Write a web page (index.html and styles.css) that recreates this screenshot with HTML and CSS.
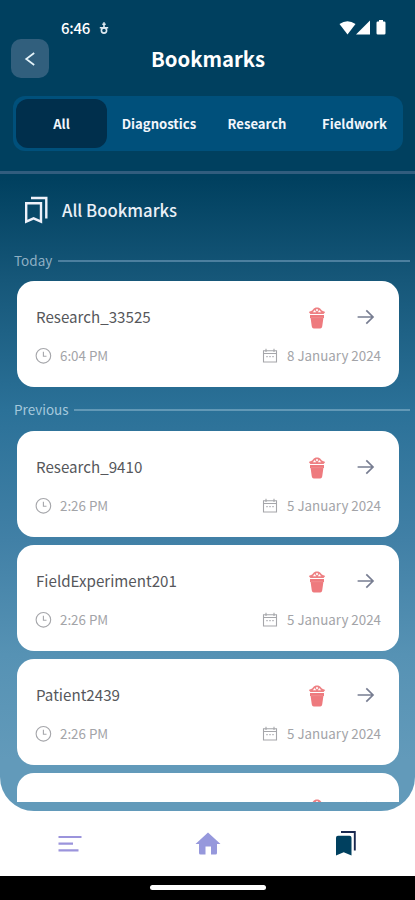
FILE: index.html
```html
<!DOCTYPE html>
<html lang="en">
<head>
<meta charset="utf-8">
<title>Bookmarks</title>
<link rel="stylesheet" href="styles.css">
</head>
<body>
<svg class="sprite" aria-hidden="true">
  <symbol id="trash" viewBox="0 0 18 24">
    <path d="M.8 5.9C2.2 5.5 4 4.9 5 3.5C6.1 2.1 7.3 1.5 9 1.5S11.9 2.1 13 3.5C14 4.9 15.8 5.5 17.2 5.9L15.6 7.9H2.4Z" fill="#ee8083"/>
    <path d="M4.8 6.2L6.8 4.1L8.1 6.2ZM9.9 6.2L11.2 4.1L13.2 6.2ZM7.7 4L9 2.8L10.3 4L9 5.5Z" fill="#fff"/>
    <path d="M2 9H16V12H15.4L14.2 20.5Q13.9 22.4 12.2 22.4H5.8Q4.1 22.4 3.8 20.5L2.6 12H2Z" fill="#ee7a7e"/>
    <path d="M3 11.7H15" stroke="#f29699" stroke-width=".6"/>
  </symbol>
  <symbol id="arrow" viewBox="0 0 18 18"><path d="M.6 9H16M9.3 2.3L16 9L9.3 15.7" fill="none" stroke="#777d91" stroke-width="1.7"/></symbol>
  <symbol id="clock" viewBox="0 0 18 18"><circle cx="9.4" cy="8.8" r="7.3" fill="none" stroke="#a5a6aa" stroke-width="1.1"/><path d="M9.4 4.8V9.3H12.5" fill="none" stroke="#a5a6aa" stroke-width="1.1"/></symbol>
  <symbol id="calendar" viewBox="0 0 16 16"><path d="M1.5 2.7H14.5V14H1.5ZM1.5 5.5H14.5M4 .7V4M12 .7V4" fill="none" stroke="#a5a6aa" stroke-width="1.1"/><path d="M4 8.7H6M7 8.7H9M10 8.7H12" stroke="#b5b6ba"/></symbol>
</svg>
<div class="phone">
  <main class="screen">
    <header class="header">
      <div class="status">
        <span class="time">6:46</span>
        <svg class="mic" viewBox="0 0 10 14"><path d="M5 1.3V7M3.3 3.3H6.7M.8 6.7H9.2" fill="none" stroke="#dce8f0" stroke-width="1.6"/><circle cx="5" cy="9.5" r="2.6" fill="none" stroke="#dce8f0" stroke-width="1.6"/></svg>
        <svg class="signals" viewBox="0 0 50 16" fill="#fff"><path d="M.5 4Q8.5 -1.5 16.5 4L8.5 14.5Z"/><path d="M31 .5V14.5H17Z"/><path d="M37.5 2.7Q37.5 1.5 38.8 1.5H40V0H44V1.5H45.2Q46.5 1.5 46.5 2.7V13.3Q46.5 14.5 45.2 14.5H38.8Q37.5 14.5 37.5 13.3Z"/></svg>
      </div>
      <div class="titlebar">
        <button class="back" aria-label="Back"><svg viewBox="0 0 12 14"><path d="M10.2 1L2.2 7L10.2 13" fill="none" stroke="#e5f4fa" stroke-width="1.7"/></svg></button>
        <h1>Bookmarks</h1>
      </div>
      <nav class="tabs">
        <span class="tab active">All</span><span class="tab">Diagnostics</span><span class="tab">Research</span><span class="tab">Fieldwork</span>
      </nav>
    </header>
    <div class="heading">
      <svg viewBox="0 0 26 30" fill="none" stroke="#eef1fa" stroke-width="2.4"><path d="M3.2 7.2H18V25.6L10.6 22.3L3.2 25.6ZM8 2H23.3V22.5"/></svg>
      <h2>All Bookmarks</h2>
    </div>
    <div class="list">
      <div class="group"><span>Today</span></div>
      <article class="card">
        <div class="row"><h3>Research_33525</h3><svg class="trash"><use href="#trash"/></svg><svg class="arrow"><use href="#arrow"/></svg></div>
        <div class="row meta"><svg class="clock"><use href="#clock"/></svg><span class="hour">6:04 PM</span><svg class="calendar"><use href="#calendar"/></svg><span class="date">8 January 2024</span></div>
      </article>
      <div class="group previous"><span>Previous</span></div>
      <article class="card">
        <div class="row"><h3>Research_9410</h3><svg class="trash"><use href="#trash"/></svg><svg class="arrow"><use href="#arrow"/></svg></div>
        <div class="row meta"><svg class="clock"><use href="#clock"/></svg><span class="hour">2:26 PM</span><svg class="calendar"><use href="#calendar"/></svg><span class="date">5 January 2024</span></div>
      </article>
      <article class="card">
        <div class="row"><h3>FieldExperiment201</h3><svg class="trash"><use href="#trash"/></svg><svg class="arrow"><use href="#arrow"/></svg></div>
        <div class="row meta"><svg class="clock"><use href="#clock"/></svg><span class="hour">2:26 PM</span><svg class="calendar"><use href="#calendar"/></svg><span class="date">5 January 2024</span></div>
      </article>
      <article class="card">
        <div class="row"><h3>Patient2439</h3><svg class="trash"><use href="#trash"/></svg><svg class="arrow"><use href="#arrow"/></svg></div>
        <div class="row meta"><svg class="clock"><use href="#clock"/></svg><span class="hour">2:26 PM</span><svg class="calendar"><use href="#calendar"/></svg><span class="date">5 January 2024</span></div>
      </article>
      <article class="card">
        <div class="row"><svg class="trash"><use href="#trash"/></svg><svg class="arrow"><use href="#arrow"/></svg></div>
      </article>
    </div>
  </main>
  <nav class="bottom">
    <svg class="menu" viewBox="0 0 26 20" stroke="#9b94dc" stroke-width="2.2"><path d="M1.5 3H24.5M1.5 9.6H16M1.5 16.3H21.5"/></svg>
    <svg class="home" viewBox="0 0 26 24" fill="#9698dc"><path d="M13 .5L25.5 12H22V21Q22 22.5 20.5 22.5H16V14.5H10.5V22.5H5.5Q4 22.5 4 21V12H.5Z"/></svg>
    <svg class="saved" viewBox="0 0 22 28"><path d="M1 7.7Q1 5.7 3 5.7H14.5Q16.5 5.7 16.5 7.7V25.5L8.7 22.2L1 25.5Z" fill="#00405f"/><path d="M6 2H19.8V20.5" fill="none" stroke="#19284f" stroke-width="1.9"/></svg>
  </nav>
  <div class="system"><i></i></div>
</div>
</body>
</html>
```
FILE: styles.css
```css
* { box-sizing: border-box; }
body { margin: 0; background: #fff; font-family: "Noto Sans CJK SC", "Noto Sans", sans-serif; }
svg { display: block; flex: none; }
h1, h2, h3 { margin: 0; }
.sprite { position: absolute; width: 0; height: 0; }
.phone { width: 415px; height: 900px; display: flex; flex-direction: column; overflow: hidden; }
.screen { height: 811px; flex: none; display: flex; flex-direction: column; border-radius: 0 0 34px 34px; overflow: hidden; background: linear-gradient(#00405f 0, #00405f 178px, #165779 280px, #2b7198 410px, #4180a6 540px, #5692b4 655px, #629aba 760px, #629aba 811px); }
.header { height: 174px; flex: none; border-bottom: 3px solid #315d7e; }
.status { height: 39px; padding: 16px 26px 0 61px; display: flex; align-items: center; color: #fff; }
.time { width: 38px; font-size: 15px; line-height: 22px; font-weight: 500; letter-spacing: -.3px; }
.mic { width: 10px; height: 14px; }
.signals { width: 50px; height: 16px; margin-left: auto; }
.titlebar { height: 39px; display: grid; grid-template-columns: 38px 1fr 38px; padding: 0 11px; }
.back { width: 38px; height: 39px; border: 0; border-radius: 10px; padding: 0; background: #315f7d; display: grid; place-items: center; }
.back svg { width: 12px; height: 14px; }
h1 { padding-left: 1px; text-align: center; color: #fff; font-size: 20.3px; line-height: 38px; font-weight: 700; }
.tabs { height: 55px; margin: 18px 12px 0 13px; padding: 3px; display: grid; grid-template-columns: 91px 104px 92px 1fr; border-radius: 12px; background: #00507b; }
.tab { text-align: center; color: #f2f6fc; font-size: 13.1px; line-height: 49px; font-weight: 700; white-space: nowrap; }
.tab:last-child { padding-left: 6px; }
.tab.active { border-radius: 12px; background: #002f4c; }
.heading { height: 73px; padding-left: 23px; display: flex; align-items: center; gap: 13px; flex: none; }
.heading svg { width: 26px; height: 30px; }
h2 { color: #eaf0f7; font-size: 16.7px; line-height: 24px; padding-bottom: 2px; font-weight: 500; }
.list { height: 555px; overflow: hidden; }
.group { height: 34px; padding: 0 5px 6px 14px; display: flex; align-items: center; gap: 6px; color: #8eafc3; font-size: 13.5px; line-height: 20px; }
.group span { padding-bottom: 2px; }
.group::after { content: ""; height: 2px; flex: 1; background: #4c7f9f; }
.previous { height: 36px; padding-bottom: 7px; gap: 5px; color: #a5c8dc; }
.previous::after { background: #6298b6; }
.card { width: 382px; height: 106px; margin: 0 0 8px 17px; padding: 24px 18px 0 19px; border-radius: 17px; background: #fff; }
.row { height: 25px; display: flex; align-items: center; }
h3 { color: #56575b; font-size: 15.15px; line-height: 23px; padding-bottom: 2px; font-weight: 400; }
.trash { width: 18px; height: 24px; margin-left: auto; }
.arrow { width: 18px; height: 18px; margin: 0 6px 1px 31px; }
.meta { margin-top: 14px; height: 23px; color: #a3a4a8; font-size: 13.35px; line-height: 20px; }
.meta span { padding-top: 1px; }
.clock { width: 18px; height: 18px; margin-left: -2px; }
.hour { margin-left: 8px; }
.calendar { width: 16px; height: 16px; margin-left: auto; }
.date { margin-left: 9px; }
.bottom { height: 65px; flex: none; background: #fff; display: grid; grid-template-columns: repeat(3, 138px); place-items: center; padding-left: 1px; }
.menu { width: 26px; height: 20px; }
.home { width: 26px; height: 24px; }
.saved { width: 22px; height: 28px; }
.system { height: 24px; background: #000; display: flex; justify-content: center; padding-top: 9px; }
.system i { width: 116px; height: 5px; border-radius: 3px; background: #fff; }
```
